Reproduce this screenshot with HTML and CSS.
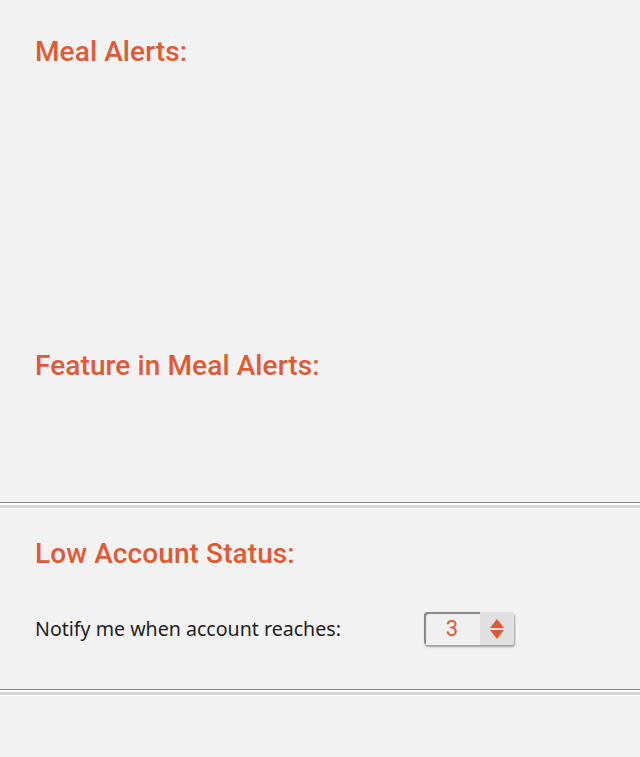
FILE: index.html
```html
<!DOCTYPE html>
<html>
<head>
<meta charset="utf-8">
<link rel="stylesheet" href="styles.css">
</head>
<body>
<section class="block block-meal">
  <h2 class="title">Meal Alerts:</h2>
  <div class="meal-body"></div>
  <h2 class="title">Feature in Meal Alerts:</h2>
  <div class="feature-body"></div>
</section>
<div class="divider"></div>
<section class="block block-low">
  <h2 class="title">Low Account Status:</h2>
  <div class="row">
    <span class="label">Notify me when account reaches:</span>
    <div class="spinner">
      <span class="spin-value">3</span>
      <span class="spin-btn">
        <svg width="16" height="22" viewBox="0 0 16 22">
          <polygon points="8,1 15,10 1,10" fill="#e05a35"/>
          <polygon points="1,12 15,12 8,21" fill="#e05a35"/>
        </svg>
      </span>
    </div>
  </div>
</section>
<div class="divider"></div>
</body>
</html>
```
FILE: styles.css
```css
html, body {
  margin: 0;
  padding: 0;
  background: #f2f2f2;
}
body {
  font-family: "Roboto", "Liberation Sans", sans-serif;
  width: 640px;
  height: 757px;
  overflow: hidden;
}
.block {
  padding: 0 0 0 35px;
}
.block-meal {
  padding-top: 36px;
}
.title {
  margin: 0;
  font-family: "Roboto", "Liberation Sans", sans-serif;
  font-weight: 500;
  font-size: 28px;
  line-height: 32px;
  color: #e05a35;
  letter-spacing: 0.1px;
}
.meal-body {
  height: 282px;
}
.feature-body {
  height: 120px;
}
.divider {
  height: 1px;
  background: #858585;
  border-bottom: 2px solid #ffffff;
  box-shadow: 0 3px 0 #d6d6d6, 0 4px 0 #fafafa;
  margin-bottom: 4px;
}
.block-low {
  padding-top: 29px;
  padding-bottom: 44px;
}
.row {
  display: flex;
  align-items: center;
  margin-top: 42px;
}
.label {
  width: 389px;
  font-family: "Noto Sans", "Liberation Sans", sans-serif;
  font-size: 19.6px;
  color: #1e1e1e;
}
.spinner {
  display: flex;
  width: 90px;
  height: 33px;
  border-radius: 3px;
  background: #efefef;
  box-shadow: 1px 2px 2px rgba(0,0,0,0.35);
  overflow: hidden;
}
.spin-value {
  flex: 1;
  display: flex;
  align-items: center;
  justify-content: center;
  font-family: "Roboto", "Liberation Sans", sans-serif;
  font-size: 22px;
  color: #e05a35;
  box-shadow: inset 2px 2px 1px rgba(0,0,0,0.45);
  border-radius: 3px 0 0 3px;
  background: #f0f0f0;
}
.spin-btn {
  width: 34px;
  display: flex;
  align-items: center;
  justify-content: center;
  background: #e0e0e0;
}
```
